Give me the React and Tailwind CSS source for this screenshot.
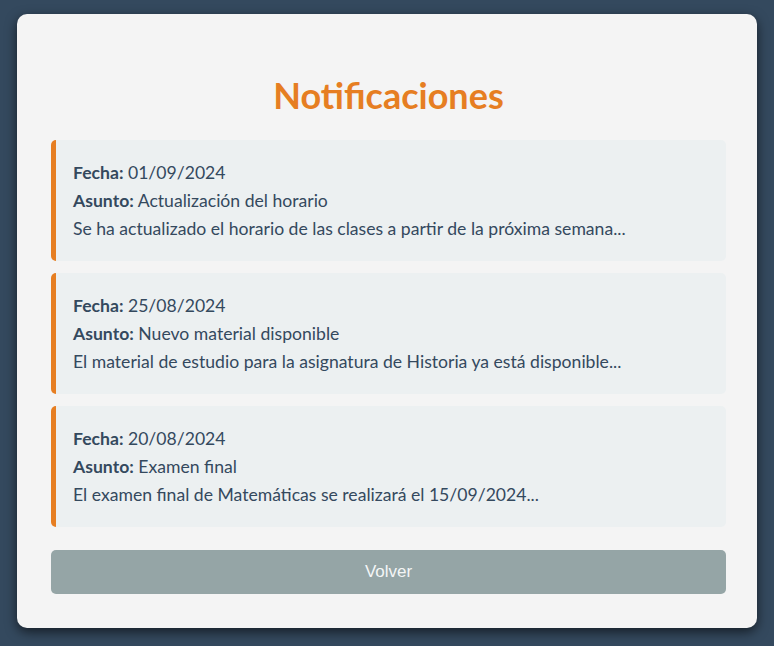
const NOTIFICATIONS = [
  {
    date: "01/09/2024",
    subject: "Actualización del horario",
    body: "Se ha actualizado el horario de las clases a partir de la próxima semana...",
  },
  {
    date: "25/08/2024",
    subject: "Nuevo material disponible",
    body: "El material de estudio para la asignatura de Historia ya está disponible...",
  },
  {
    date: "20/08/2024",
    subject: "Examen final",
    body: "El examen final de Matemáticas se realizará el 15/09/2024...",
  },
];

export default function App() {
  return (
    <div className="min-h-screen bg-[#34495e] px-[17px] pt-[14px] pb-4 font-['Lato',sans-serif]">
      <div className="flex flex-col rounded-[10px] bg-[#f4f4f4] pl-[34px] pr-[31px] pt-[60px] pb-[34px] shadow-[0_4px_12px_rgba(0,0,0,0.6)]">
        <h2 className="mb-[23px] text-center text-[36px] font-bold leading-[43px] text-[#e67e22]">
          Notificaciones
        </h2>

        <div className="flex flex-col gap-[12px]">
          {NOTIFICATIONS.map((item) => (
            <div
              key={item.date}
              className="rounded-[5px] border-l-[5px] border-[#e67e22] bg-[#ecf0f1] py-[18.5px] pl-[17px] pr-4 text-[17.6px] leading-[28px] text-[#34495e]"
            >
              <p>
                <span className="font-bold">Fecha:</span> {item.date}
              </p>
              <p>
                <span className="font-bold">Asunto:</span> {item.subject}
              </p>
              <p>{item.body}</p>
            </div>
          ))}
        </div>

        <button className="mt-[23px] h-[44px] w-full rounded-[5px] bg-[#95a5a6] font-['Liberation_Sans',Arial,sans-serif] text-[17px] text-[#f4f6f6]">
          Volver
        </button>
      </div>
    </div>
  );
}
